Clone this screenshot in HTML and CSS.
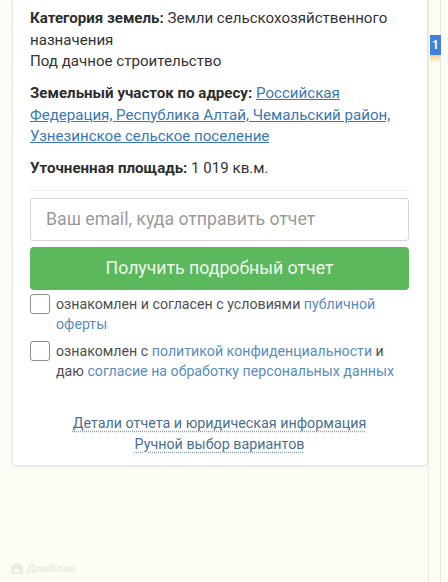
FILE: index.html
```html
<!DOCTYPE html>
<html lang="ru">
<head>
<meta charset="utf-8">
<link rel="stylesheet" href="styles.css">
</head>
<body>
<div class="page">
  <div class="card">
    <p class="row">
      <b>Категория земель:</b> Земли сельскохозяйственного назначения<br>
      Под дачное строительство
    </p>
    <p class="row">
      <b>Земельный участок по адресу:</b> <a class="addr" href="#">Российская Федерация, Республика Алтай, Чемальский район, Узнезинское сельское поселение</a>
    </p>
    <p class="row">
      <b>Уточненная площадь:</b> 1 019 кв.м.
    </p>
    <div class="divider"></div>
    <div class="email">Ваш email, куда отправить отчет</div>
    <div class="btn">Получить подробный отчет</div>
    <div class="check">
      <span class="box"></span>
      <span class="ctext">ознакомлен и согласен с условиями <a href="#">публичной оферты</a></span>
    </div>
    <div class="check">
      <span class="box"></span>
      <span class="ctext">ознакомлен с <a href="#">политикой конфиденциальности</a> и даю <a href="#">согласие на обработку персональных данных</a></span>
    </div>
    <div class="links">
      <a href="#">Детали отчета и юридическая информация</a>
      <a href="#">Ручной выбор вариантов</a>
    </div>
  </div>
  <div class="strip">
    <div class="badge">1</div>
    <div class="tail"></div>
  </div>
</div>
<div class="logo">
  <svg width="14" height="14" viewBox="0 0 14 14"><path d="M7 1 L13 5 V13 H1 V5 Z M5 8 V11 H9 V8 Z" fill="#ecebe4" fill-rule="evenodd"/></svg>
  <span>ДомКлик</span>
</div>
</body>
</html>
```
FILE: styles.css
```css
html, body {
  margin: 0;
  padding: 0;
  background: #fdfcf5;
  font-family: Roboto, "Noto Sans", Arial, sans-serif;
  color: #333;
}
.page {
  display: flex;
  align-items: flex-start;
  padding-left: 12px;
}
.card {
  width: 416px;
  box-sizing: border-box;
  background: #fff;
  border: 1px solid #e7e7e1;
  border-top: none;
  border-radius: 0 0 4px 4px;
  box-shadow: 0 1px 3px rgba(0,0,0,0.08);
  padding: 8px 18px 10px 17px;
  font-size: 15.1px;
  line-height: 21.5px;
}
.row {
  margin: 0 0 10.5px;
}
.row b {
  font-weight: 700;
  color: #2d2d2d;
}
.addr {
  color: #3a78b3;
  text-decoration: underline;
}
.divider {
  height: 1px;
  background: #efefec;
  margin: 0 0 7px;
}
.email {
  height: 43px;
  box-sizing: border-box;
  border: 1px solid #d5d5d5;
  border-radius: 3px;
  padding: 0 15px;
  display: flex;
  align-items: center;
  color: #9a9a9a;
  font-size: 17.7px;
}
.btn {
  margin-top: 6px;
  height: 43px;
  border-radius: 4px;
  background: #5cb85c;
  color: #eef8ee;
  font-size: 17.7px;
  display: flex;
  align-items: center;
  justify-content: center;
}
.check {
  display: flex;
  align-items: flex-start;
  gap: 6px;
  margin-top: 4px;
  font-size: 14.2px;
  line-height: 20px;
  color: #4f4f4f;
}
.check + .check {
  margin-top: 7px;
}
.box {
  flex: none;
  width: 20px;
  height: 20px;
  box-sizing: border-box;
  border: 1px solid #8f8f8f;
  border-radius: 3px;
  background: #fff;
}
.check a {
  color: #5a8cbf;
  text-decoration: none;
}
.links {
  margin-top: 32px;
  display: flex;
  flex-direction: column;
  align-items: center;
  font-size: 14.3px;
  line-height: 21px;
}
.links a {
  color: #4b6f90;
  text-decoration: underline dotted #8aa0b5;
  text-underline-offset: 3px;
}
.strip {
  width: 13px;
  height: 582px;
  border-left: 1px solid #e9e8e0;
  border-right: 1px solid #e9e8e0;
  padding-top: 35px;
  box-sizing: border-box;
}
.badge {
  width: 11px;
  height: 20px;
  margin-left: 1px;
  background: #3f80e0;
  color: #fff;
  font-size: 12px;
  font-weight: 700;
  line-height: 20px;
  text-align: center;
}
.tail {
  width: 10px;
  height: 8px;
  margin-left: 1px;
  background: linear-gradient(#f6d27a, rgba(253,252,245,0));
}
.logo {
  position: absolute;
  left: 10px;
  top: 561px;
  display: flex;
  align-items: center;
  gap: 3px;
  color: #ecebe4;
  font-size: 11px;
  font-weight: 700;
}
```
